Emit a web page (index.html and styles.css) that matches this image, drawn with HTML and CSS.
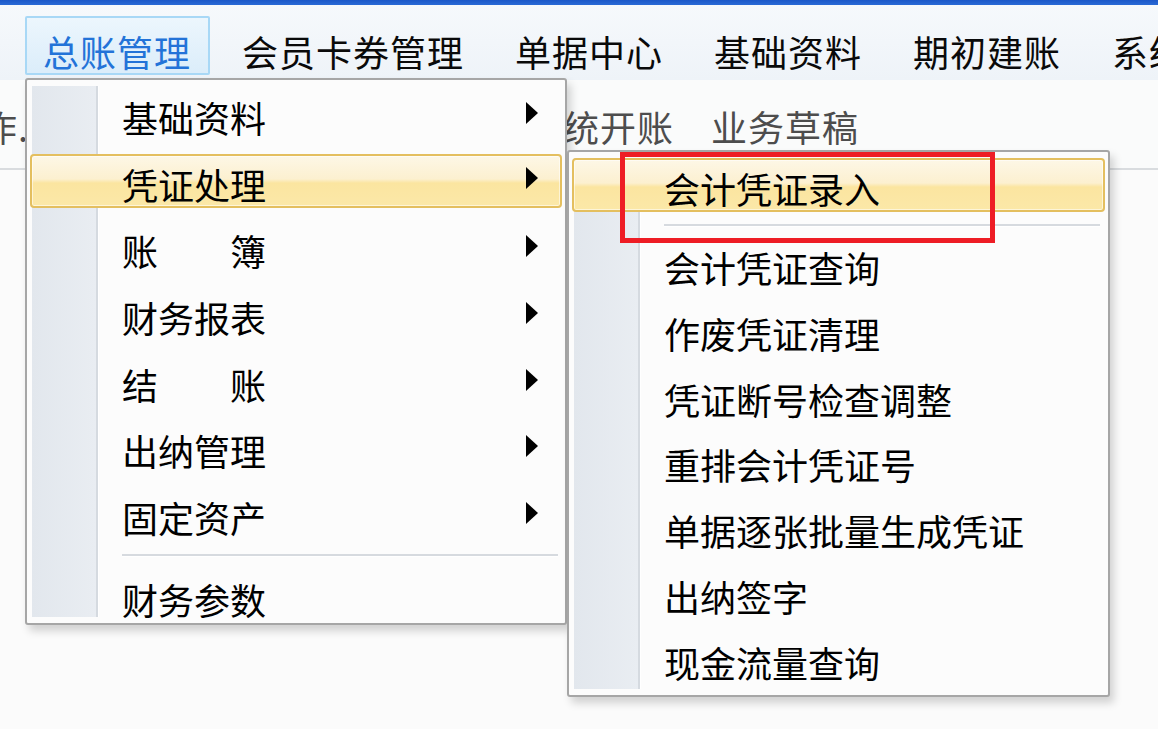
FILE: index.html
```html
<!DOCTYPE html>
<html lang="zh-CN">
<head>
<meta charset="utf-8">
<title>总账管理</title>
<link rel="stylesheet" href="styles.css">
</head>
<body>
<div class="app">
  <div class="topline"></div>
  <nav class="menubar">
    <div class="mb-item mb-item--active">总账管理</div>
    <div class="mb-item">会员卡券管理</div>
    <div class="mb-item">单据中心</div>
    <div class="mb-item">基础资料</div>
    <div class="mb-item">期初建账</div>
    <div class="mb-item">系统设置</div>
  </nav>
  <div class="toolbar">
    <span class="tb-item tb-item--first">操作.</span>
    <span class="tb-item tb-item--sys">系统开账</span>
    <span class="tb-item">业务草稿</span>
  </div>
  <div class="content"></div>

  <div class="menu menu--main">
    <div class="menu-body menu-body--main">
      <div class="mi"><span class="mi-text">基础资料</span><svg class="arrow" viewBox="0 0 12 22"><polygon points="0,0 12,11 0,22"/></svg></div>
      <div class="mi mi--hot"><span class="mi-text">凭证处理</span><svg class="arrow" viewBox="0 0 12 22"><polygon points="0,0 12,11 0,22"/></svg></div>
      <div class="mi"><span class="mi-text">账　　簿</span><svg class="arrow" viewBox="0 0 12 22"><polygon points="0,0 12,11 0,22"/></svg></div>
      <div class="mi"><span class="mi-text">财务报表</span><svg class="arrow" viewBox="0 0 12 22"><polygon points="0,0 12,11 0,22"/></svg></div>
      <div class="mi"><span class="mi-text">结　　账</span><svg class="arrow" viewBox="0 0 12 22"><polygon points="0,0 12,11 0,22"/></svg></div>
      <div class="mi"><span class="mi-text">出纳管理</span><svg class="arrow" viewBox="0 0 12 22"><polygon points="0,0 12,11 0,22"/></svg></div>
      <div class="mi"><span class="mi-text">固定资产</span><svg class="arrow" viewBox="0 0 12 22"><polygon points="0,0 12,11 0,22"/></svg></div>
      <div class="msep"></div>
      <div class="mi mi--last"><span class="mi-text">财务参数</span></div>
    </div>
  </div>

  <div class="menu menu--sub">
    <div class="menu-body menu-body--sub">
      <div class="mi mi--hot"><span class="mi-text">会计凭证录入</span></div>
      <div class="msep msep--sub"></div>
      <div class="mi"><span class="mi-text">会计凭证查询</span></div>
      <div class="mi"><span class="mi-text">作废凭证清理</span></div>
      <div class="mi"><span class="mi-text">凭证断号检查调整</span></div>
      <div class="mi"><span class="mi-text">重排会计凭证号</span></div>
      <div class="mi"><span class="mi-text">单据逐张批量生成凭证</span></div>
      <div class="mi"><span class="mi-text">出纳签字</span></div>
      <div class="mi"><span class="mi-text">现金流量查询</span></div>
    </div>
  </div>

  <div class="callout"></div>
</div>
</body>
</html>
```

FILE: styles.css
```css
html, body {
  margin: 0;
  padding: 0;
}
body {
  width: 1158px;
  height: 729px;
  overflow: hidden;
  background: #fbfbfb;
  font-family: "Noto Sans CJK SC", "Noto Sans", sans-serif;
  color: #000;
}
.app {
  position: relative;
  width: 1158px;
  height: 729px;
  overflow: hidden;
}
.topline {
  height: 5px;
  background: linear-gradient(#1c58c8, #2a6ad6);
}
.menubar {
  box-sizing: border-box;
  height: 75px;
  padding: 11px 0 0 25px;
  display: flex;
  gap: 14px;
  background: linear-gradient(#f6f9fc, #eef3f8);
  white-space: nowrap;
}
.mb-item {
  box-sizing: border-box;
  height: 59px;
  padding: 15px 17px 0 16px;
  font-size: 36px;
  line-height: 36px;
  letter-spacing: 1px;
  border: 2px solid transparent;
  flex: 0 0 auto;
  color: #0a0a0a;
}
.mb-item--active {
  border-color: #a8d8f6;
  border-radius: 2px;
  background: linear-gradient(#ecf6fd, #dbedfa);
  color: #2373d8;
}
.toolbar {
  box-sizing: border-box;
  height: 90px;
  padding-top: 28px;
  display: flex;
  align-items: flex-start;
  gap: 37px;
  border-bottom: 2px solid #d9dcdf;
  background: #fafbfb;
  white-space: nowrap;
}
.tb-item {
  font-size: 36px;
  line-height: 36px;
  letter-spacing: 1px;
  color: #4d4d4d;
  flex: 0 0 auto;
}
.tb-item--first {
  margin-left: -56px;
}
.tb-item--sys {
  margin-left: 460px;
}
.content {
  height: 559px;
  background: #fbfbfb;
}

/* dropdown menus */
.menu {
  position: absolute;
  box-sizing: border-box;
  width: 542px;
  height: 547px;
  padding: 6px 5px;
  border: 2px solid #a6a6a6;
  border-radius: 3px;
  background: #fcfcfc;
  box-shadow: 4px 6px 8px rgba(0, 0, 0, 0.17);
}
.menu--main {
  left: 25px;
  top: 78px;
}
.menu--sub {
  left: 567px;
  top: 150px;
  width: 543px;
}
.menu-body {
  box-sizing: border-box;
  height: 100%;
  display: flex;
  flex-direction: column;
  background: linear-gradient(90deg, #e2e7ed 0, #e9edf2 64px, #d5dae0 64px, #d5dae0 66px, #ffffff 66px, #ffffff 67px, #fcfcfc 67px);
}
.menu-body--main {
  padding-top: 1px;
  gap: 12.7px;
}
.menu-body--sub {
  gap: 11.7px;
}
.mi {
  box-sizing: border-box;
  flex: 0 0 54px;
  height: 54px;
  display: flex;
  align-items: flex-start;
  padding: 12px 0 0 90px;
  font-size: 36px;
  line-height: 36px;
  white-space: nowrap;
}
.mi--last {
  flex: 0 0 48px;
  height: 48px;
}
.mi--hot {
  margin: 0 -2px;
  padding: 10px 0 0 90px;
  border: 2px solid #e4bf5f;
  border-radius: 4px;
  background: linear-gradient(#fdf7e6 0%, #fcf0d0 46%, #fbe5a0 54%, #fbe8a8 100%);
  box-shadow: inset 0 0 0 1px rgba(255, 255, 255, 0.55);
}
.mi-text {
  flex: 0 0 auto;
}
.arrow {
  width: 12px;
  height: 22px;
  margin: 3px 22px 0 auto;
  fill: #000;
  flex: 0 0 auto;
}
.mi--hot .arrow {
  margin-top: 1px;
  margin-right: 22px;
}
.msep {
  flex: 0 0 2px;
  height: 2px;
  margin: 0 2px 0 90px;
  background: #d6dadf;
  box-shadow: 0 1px 0 #ffffff;
}
.msep--sub {
  margin-right: 3px;
}
.callout {
  position: absolute;
  left: 620px;
  top: 152px;
  width: 375px;
  height: 91px;
  box-sizing: border-box;
  border: 5px solid #ee1d25;
}
```
